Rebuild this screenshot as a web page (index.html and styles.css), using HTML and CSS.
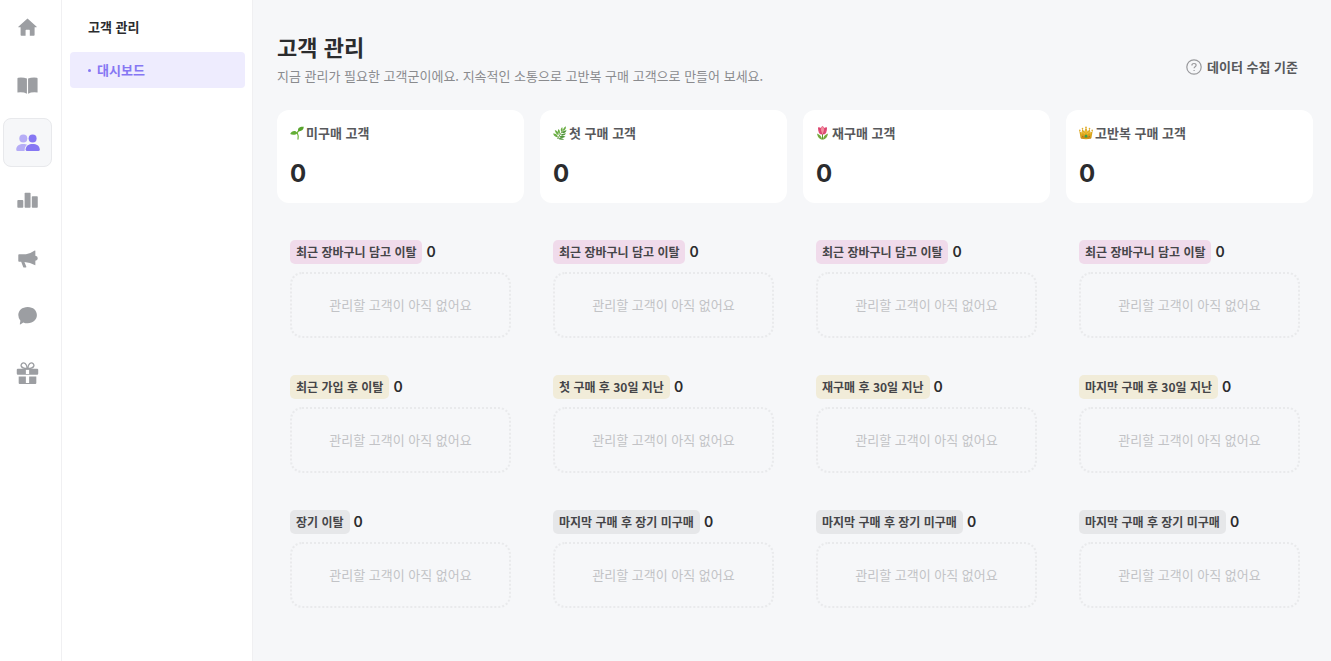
FILE: index.html
```html
<!DOCTYPE html>
<html lang="ko">
<head>
    <meta charset="UTF-8">
    <meta name="viewport" content="width=device-width, initial-scale=1">
    <title>고객 관리</title>
    <link rel="stylesheet" href="styles.css">
</head>
<body>
    <div class="app">
        <!-- Icon rail -->
        <nav class="rail" aria-label="메뉴">
            <div class="rail-items">
                <a class="rail-item" href="#" aria-label="홈">
                    <svg viewBox="0 0 24 24"><path d="M12 2.6 L21.6 11.2 Q21.8 11.8 21.2 11.8 H19.4 V19.9 Q19.4 20.7 18.6 20.7 H14.4 V14.8 Q14.4 14.3 13.9 14.3 H10.5 Q10 14.3 10 14.8 V20.7 H5.6 Q4.8 20.7 4.8 19.9 V11.8 H2.8 Q2.2 11.8 2.4 11.2 Z"/></svg>
                </a>
                <a class="rail-item" href="#" aria-label="가이드">
                    <svg viewBox="0 0 24 24"><path d="M1.5 4.8 Q1.5 4 2.4 3.8 Q7.5 3.2 11.4 4.8 V20.5 Q7.5 18.5 1.5 19.3 Z M12.6 4.8 Q16.5 3.2 21.6 3.8 Q22.5 4 22.5 4.8 V19.3 Q16.5 18.5 12.6 20.5 Z"/></svg>
                </a>
                <a class="rail-item active" href="#" aria-label="고객 관리">
                    <svg viewBox="0 0 24 24"><g class="person-back"><circle cx="7.3" cy="7.6" r="4"/><path d="M0.2 18.4 C0.5 14.4 3.5 12.9 7.3 12.9 C9 12.9 10.2 13.2 11.2 13.8 C9.3 15.2 8.7 16.9 8.6 20 H1.6 Q0.2 20 0.2 18.4 Z"/></g><circle cx="16.6" cy="7.6" r="4"/><path d="M9.6 18.4 C9.9 14.6 12.9 12.9 16.7 12.9 C20.5 12.9 23.5 14.6 23.8 18.4 Q23.8 20 22.3 20 H11.1 Q9.6 20 9.6 18.4 Z"/></svg>
                </a>
                <a class="rail-item" href="#" aria-label="통계">
                    <svg viewBox="0 0 24 24"><rect x="1.4" y="11.6" width="6.2" height="8" rx="0.8"/><rect x="9" y="4" width="6.2" height="15.6" rx="0.8"/><rect x="16.5" y="7.6" width="6.2" height="12" rx="0.8"/></svg>
                </a>
                <a class="rail-item" href="#" aria-label="마케팅">
                    <svg viewBox="0 0 24 24"><path d="M3.2 7.6 H10.4 Q15 6.8 19.6 3.6 Q20.2 3.4 20.2 4 V9.1 Q22.7 9.5 22.7 11.8 Q22.7 14.1 20.2 14.4 V18.4 Q20.2 19.2 19.5 18.8 Q15 16.2 8.8 15.6 L10.8 20.6 Q11 21.4 10.2 21.4 H8.4 Q7.8 21.4 7.5 20.8 L5.4 15.4 H3.2 Q2.4 15.4 2.4 14.6 V8.4 Q2.4 7.6 3.2 7.6 Z"/></svg>
                </a>
                <a class="rail-item" href="#" aria-label="메시지">
                    <svg viewBox="0 0 24 24"><path d="M12.2 3.1 C18 3.1 21.8 6.8 21.8 11.6 C21.8 16.4 18 20.1 12.2 20.1 C10.4 20.1 9 19.8 7.6 19.2 Q6.2 20.4 4.4 21.4 Q3.9 21.4 4 20.8 L4.6 17.4 Q2.4 15 2.4 11.6 C2.4 6.8 6.4 3.1 12.2 3.1 Z"/></svg>
                </a>
                <a class="rail-item" href="#" aria-label="혜택">
                    <svg viewBox="0 0 24 24"><path fill-rule="evenodd" d="M1.9 7 H22.1 Q23.2 7 23.2 8.1 V12 Q23.2 13.3 22 13.3 H2 Q0.8 13.3 0.8 12 V8.1 Q0.8 7 1.9 7 Z M10.3 8.2 V12.6 H13.7 V8.2 Z"/><path d="M2.8 15 H10.3 V23 H3.8 Q2.8 23 2.8 22 Z M13.7 15 H21.2 V22 Q21.2 23 20.2 23 H13.7 Z M10 22 H14 V23 H10 Z"/><path class="ribbon" d="M11.7 7 C5 6.6 4.6 3.6 6 1.9 C8.2 -0.5 11.5 1.9 11.7 7 Z M12.3 7 C19 6.6 19.4 3.6 18 1.9 C15.8 -0.5 12.5 1.9 12.3 7 Z"/></svg>
                </a>
            </div>
        </nav>

        <!-- Sub menu -->
        <aside class="sidebar">
            <h2 class="sidebar-title">고객 관리</h2>
            <a class="sidebar-link" href="#"><span class="dot"></span>대시보드</a>
        </aside>

        <main class="main">
            <header class="page-header">
                <div>
                    <h1>고객 관리</h1>
                    <p>지금 관리가 필요한 고객군이에요. 지속적인 소통으로 고반복 구매 고객으로 만들어 보세요.</p>
                </div>
                <button class="help" type="button">
                    <svg viewBox="0 0 16 16"><circle cx="8" cy="8" r="7.2"/><path d="M5.9 6.5 C5.9 5.2 6.8 4.5 8 4.5 C9.2 4.5 10.1 5.2 10.1 6.3 C10.1 7.7 8.1 7.8 8.1 9.3"/><path d="M8.1 11 V12"/></svg>
                    데이터 수집 기준
                </button>
            </header>

            <div class="board">
                <!-- No purchase -->
                <section class="column">
                    <div class="card">
                        <h3>
                            <svg viewBox="0 0 14 14"><path d="M8 13.2 Q8.8 10 7.2 6.8 Q7.8 5.4 9.2 4.2" fill="none" stroke="#72b53b" stroke-width="1.2" stroke-linecap="round"/><path d="M7.5 7.2 C5.5 9.2 2 9.2 0.2 8 C1.5 4.8 5.6 3.8 7.5 7.2 Z" fill="#63ae35"/><path d="M8.2 5 C7.2 2 10 0.4 13.8 0.8 C13.5 4.2 11 5.8 8.2 5 Z" fill="#58a42d"/></svg>
                            미구매 고객
                        </h3>
                        <strong>0</strong>
                    </div>
                    <div class="group">
                        <div class="group-head"><span class="tag pink">최근 장바구니 담고 이탈</span><b>0</b></div>
                        <div class="empty">관리할 고객이 아직 없어요</div>
                    </div>
                    <div class="group">
                        <div class="group-head"><span class="tag yellow">최근 가입 후 이탈</span><b>0</b></div>
                        <div class="empty">관리할 고객이 아직 없어요</div>
                    </div>
                    <div class="group">
                        <div class="group-head"><span class="tag gray">장기 이탈</span><b>0</b></div>
                        <div class="empty">관리할 고객이 아직 없어요</div>
                    </div>
                </section>

                <!-- First purchase -->
                <section class="column">
                    <div class="card">
                        <h3>
                            <svg viewBox="0 0 14 14"><path d="M12 2 Q7.5 7 4.5 12.8" fill="none" stroke="#64973f" stroke-width="0.9"/><path d="M12.8 0.3 Q13.4 3.5 10.3 4.8 Q9.8 1.9 12.8 0.3 Z M9.2 1 Q10.6 3.6 8.4 6 Q6.8 3.2 9.2 1 Z M5.4 3 Q7.8 5 6.5 8.2 Q4 6.1 5.4 3 Z M1.8 4 Q5.8 5 5.6 9.2 Q2.4 8 1.8 4 Z M0.1 7.5 Q4.5 7.4 5 11.4 Q1.3 11.3 0.1 7.5 Z" fill="#6aae43"/><path d="M13.6 4.2 Q12.5 7.4 8.9 7 Q10.2 4.2 13.6 4.2 Z M13.1 7.6 Q11 10.4 7.3 9 Q9.6 6.8 13.1 7.6 Z M12.5 10.8 Q9.2 13 6.1 11 Q8.6 8.8 12.5 10.8 Z M11.2 13.5 Q7.5 14.5 4.8 12.6 Q8 11 11.2 13.5 Z" fill="#4f9638"/></svg>
                            첫 구매 고객
                        </h3>
                        <strong>0</strong>
                    </div>
                    <div class="group">
                        <div class="group-head"><span class="tag pink">최근 장바구니 담고 이탈</span><b>0</b></div>
                        <div class="empty">관리할 고객이 아직 없어요</div>
                    </div>
                    <div class="group">
                        <div class="group-head"><span class="tag yellow">첫 구매 후 30일 지난</span><b>0</b></div>
                        <div class="empty">관리할 고객이 아직 없어요</div>
                    </div>
                    <div class="group">
                        <div class="group-head"><span class="tag gray">마지막 구매 후 장기 미구매</span><b>0</b></div>
                        <div class="empty">관리할 고객이 아직 없어요</div>
                    </div>
                </section>

                <!-- Repurchase -->
                <section class="column">
                    <div class="card">
                        <h3>
                            <svg viewBox="-1 0 14 14"><path d="M5.5 7 V13.5" stroke="#5f982c" stroke-width="1"/><path d="M5.2 13.8 Q0.8 12.6 0 7.4 Q4.4 8.8 5.2 13.8 Z M5.8 13.8 Q10.2 12.6 11 7.4 Q6.6 8.8 5.8 13.8 Z" fill="#74a83d"/><path d="M1.1 1.2 Q3 1 4 2 Q4.4 0.4 5.5 0 Q6.6 0.4 7.1 2 Q8 1 9.9 1.2 Q10.6 8.5 5.5 8.6 Q0.5 8.5 1.1 1.2 Z" fill="#e14d76"/><path d="M5.5 0.3 Q9 4.2 5.5 8.2 Q2.1 4.2 5.5 0.3 Z" fill="#f390a0"/><path d="M1.4 2 Q4.6 4.2 4.7 8.1 M9.6 2 Q6.4 4.2 6.3 8.1" fill="none" stroke="#c92f5e" stroke-width="0.5"/></svg>
                            재구매 고객
                        </h3>
                        <strong>0</strong>
                    </div>
                    <div class="group">
                        <div class="group-head"><span class="tag pink">최근 장바구니 담고 이탈</span><b>0</b></div>
                        <div class="empty">관리할 고객이 아직 없어요</div>
                    </div>
                    <div class="group">
                        <div class="group-head"><span class="tag yellow">재구매 후 30일 지난</span><b>0</b></div>
                        <div class="empty">관리할 고객이 아직 없어요</div>
                    </div>
                    <div class="group">
                        <div class="group-head"><span class="tag gray">마지막 구매 후 장기 미구매</span><b>0</b></div>
                        <div class="empty">관리할 고객이 아직 없어요</div>
                    </div>
                </section>

                <!-- Loyal -->
                <section class="column">
                    <div class="card">
                        <h3>
                            <svg viewBox="0 0 14 14"><path d="M1.6 12.2 L0.3 4.8 L2.4 6.8 L3.5 2.8 L5.2 5.8 L7 1.4 L8.8 5.8 L10.5 2.8 L11.6 6.8 L13.7 4.8 L12.4 12.2 Q7 14.2 1.6 12.2 Z" fill="#d9a31b"/><path d="M2.4 8.4 L3.6 5.6 L5.6 8.2 L7 4.2 L8.4 8.2 L10.4 5.6 L11.6 8.4" fill="none" stroke="#f0c33a" stroke-width="0.9"/><path d="M2 12.2 Q7 10.8 12 12.2" fill="none" stroke="#a86a14" stroke-width="0.6"/><circle cx="0.8" cy="4.4" r="0.8" fill="#e0ae2d"/><circle cx="3.5" cy="2.6" r="0.8" fill="#e0ae2d"/><circle cx="7" cy="1.4" r="0.9" fill="#e0ae2d"/><circle cx="10.5" cy="2.6" r="0.8" fill="#e0ae2d"/><circle cx="13.2" cy="4.4" r="0.8" fill="#e0ae2d"/><circle cx="7" cy="10.2" r="1.4" fill="#36a04b"/><circle cx="3.8" cy="10.4" r="0.7" fill="#b95c24"/><circle cx="10.2" cy="10.4" r="0.7" fill="#b95c24"/></svg>
                            고반복 구매 고객
                        </h3>
                        <strong>0</strong>
                    </div>
                    <div class="group">
                        <div class="group-head"><span class="tag pink">최근 장바구니 담고 이탈</span><b>0</b></div>
                        <div class="empty">관리할 고객이 아직 없어요</div>
                    </div>
                    <div class="group">
                        <div class="group-head"><span class="tag yellow">마지막 구매 후 30일 지난</span><b>0</b></div>
                        <div class="empty">관리할 고객이 아직 없어요</div>
                    </div>
                    <div class="group">
                        <div class="group-head"><span class="tag gray">마지막 구매 후 장기 미구매</span><b>0</b></div>
                        <div class="empty">관리할 고객이 아직 없어요</div>
                    </div>
                </section>
            </div>
        </main>
    </div>
</body>
</html>
```
FILE: styles.css
```css
* {
    box-sizing: border-box;
}
body {
    margin: 0;
    background-color: #f6f7f9;
    color: #2b2c2e;
    font-family: "Noto Sans CJK KR", sans-serif;
    font-size: 13px;
    line-height: 20px;
}
h1, h2, h3, p {
    margin: 0;
}
a {
    text-decoration: none;
}
.app {
    display: flex;
    min-height: 100vh;
}

/* icon rail */
.rail {
    flex: none;
    width: 62px;
    padding: 3px 0 0 3px;
    background-color: #fff;
    border-right: 1px solid #f0f0f2;
}
.rail-items {
    height: 395px;
    display: flex;
    flex-direction: column;
    justify-content: space-between;
}
.rail-item {
    width: 49px;
    height: 49px;
    border: 1px solid transparent;
    border-radius: 8px;
    display: flex;
    align-items: center;
    justify-content: center;
}
.rail-item svg {
    width: 23px;
    height: 23px;
    fill: #9c9ea2;
}
.rail-item .ribbon {
    fill: none;
    stroke: #9c9ea2;
    stroke-width: 1.4;
}
.rail-item.active {
    background-color: #f6f7f9;
    border-color: #e8e9ec;
}
.rail-item.active svg {
    width: 24px;
    height: 24px;
    fill: #8677f3;
}
.rail-item .person-back {
    fill: #b6adf6;
}

/* sub menu */
.sidebar {
    flex: none;
    width: 191px;
    padding: 17px 7px 17px 8px;
    background-color: #fff;
    border-right: 1px solid #f0f0f2;
}
.sidebar-title {
    padding: 0 18px;
    margin-bottom: 15px;
    font-size: 13px;
    font-weight: 700;
}
.sidebar-link {
    display: flex;
    align-items: center;
    gap: 6px;
    height: 36px;
    padding: 0 18px;
    border-radius: 4px;
    background-color: #eeecfe;
    color: #8677f3;
    font-weight: 700;
}
.dot {
    width: 3px;
    height: 3px;
    border-radius: 50%;
    background-color: #8677f3;
}

/* content */
.main {
    flex: 1;
    min-width: 0;
    padding: 30px 18px 30px 24px;
}
.page-header {
    display: flex;
    justify-content: space-between;
    align-items: flex-end;
    margin-bottom: 24px;
}
.page-header h1 {
    font-size: 22px;
    line-height: 32px;
    font-weight: 700;
}
.page-header p {
    margin-top: 4px;
    color: #8a8b8e;
}
.help {
    display: flex;
    align-items: center;
    gap: 5px;
    margin: 0 15px 9px 0;
    padding: 0;
    border: none;
    background: none;
    color: #58595c;
    font-family: inherit;
    font-size: 13px;
    font-weight: 700;
    line-height: 20px;
    cursor: pointer;
}
.help svg {
    width: 16px;
    height: 16px;
    fill: none;
    stroke: #999a9d;
    stroke-width: 1.2;
}
.board {
    display: grid;
    grid-template-columns: repeat(4, 1fr);
    gap: 16px;
}
.card {
    height: 93px;
    padding: 13px;
    border-radius: 12px;
    background-color: #fff;
}
.card h3 {
    display: flex;
    align-items: center;
    gap: 2px;
    color: #58595c;
    font-size: 13px;
    font-weight: 700;
    line-height: 20px;
}
.card h3 svg {
    width: 14px;
    height: 14px;
}
.card strong {
    display: block;
    margin-top: 15px;
    font-family: Inter, sans-serif;
    font-size: 24px;
    font-weight: 700;
    line-height: 32px;
}
.group {
    margin: 37px 13px 0;
}
.group-head {
    display: flex;
    align-items: center;
    gap: 4px;
    margin-bottom: 8px;
}
.group-head b {
    font-family: Inter, sans-serif;
    font-size: 14px;
    font-weight: 600;
}
.tag {
    padding: 2px 6px;
    border-radius: 5px;
    color: #454548;
    font-size: 12px;
    font-weight: 700;
}
.pink {
    background-color: #f0dbeb;
}
.yellow {
    background-color: #f1ecd9;
}
.gray {
    background-color: #e6e7e9;
}
.empty {
    display: flex;
    align-items: center;
    justify-content: center;
    height: 66px;
    border: 2px dotted #e9eaec;
    border-radius: 12px;
    color: #c2c3c6;
}
```
